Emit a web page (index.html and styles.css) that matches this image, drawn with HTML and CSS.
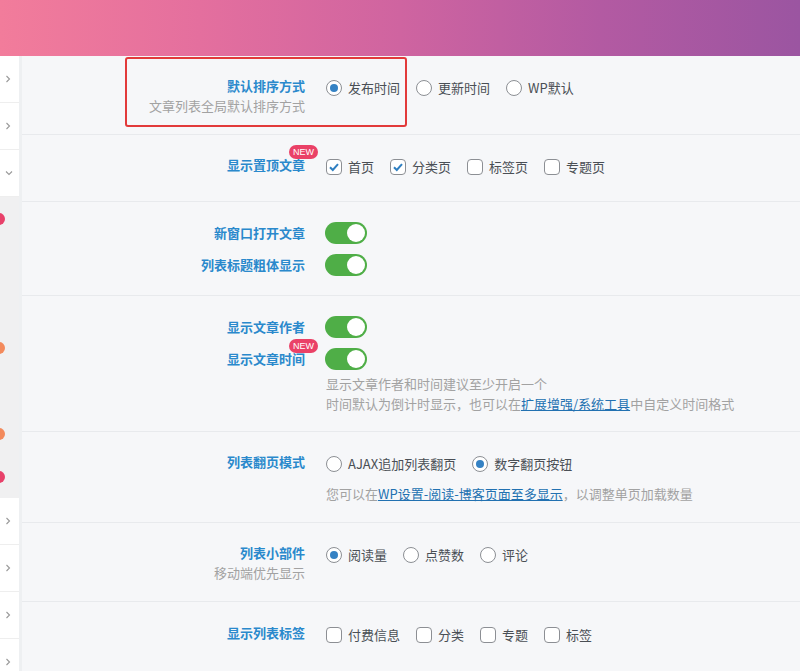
FILE: index.html
```html
<!DOCTYPE html>
<html lang="zh-CN">
<head>
    <meta charset="UTF-8">
    <meta name="viewport" content="width=device-width, initial-scale=1.0">
    <title>主题设置 - 文章列表</title>
    <link rel="stylesheet" href="styles.css">
</head>
<body>
    <div class="banner"></div>
    <div class="page">
        <aside class="side">
            <div class="side-item"><svg width="6" height="8" viewBox="0 0 6 8"><path d="M1.5 1l3 3-3 3" fill="none" stroke="#999" stroke-width="1.1"/></svg></div>
            <div class="side-item"><svg width="6" height="8" viewBox="0 0 6 8"><path d="M1.5 1l3 3-3 3" fill="none" stroke="#999" stroke-width="1.1"/></svg></div>
            <div class="side-item"><svg width="8" height="6" viewBox="0 0 8 6"><path d="M1 1.5l3 3 3-3" fill="none" stroke="#999" stroke-width="1.1"/></svg></div>
            <div class="side-sub">
                <div class="sub-item"><span class="dot pink"></span></div>
                <div class="sub-item"></div>
                <div class="sub-item"></div>
                <div class="sub-item"><span class="dot orange"></span></div>
                <div class="sub-item"></div>
                <div class="sub-item"><span class="dot orange"></span></div>
                <div class="sub-item"><span class="dot pink"></span></div>
            </div>
            <div class="side-item"><svg width="6" height="8" viewBox="0 0 6 8"><path d="M1.5 1l3 3-3 3" fill="none" stroke="#999" stroke-width="1.1"/></svg></div>
            <div class="side-item"><svg width="6" height="8" viewBox="0 0 6 8"><path d="M1.5 1l3 3-3 3" fill="none" stroke="#999" stroke-width="1.1"/></svg></div>
            <div class="side-item"><svg width="6" height="8" viewBox="0 0 6 8"><path d="M1.5 1l3 3-3 3" fill="none" stroke="#999" stroke-width="1.1"/></svg></div>
            <div class="side-item"><svg width="6" height="8" viewBox="0 0 6 8"><path d="M1.5 1l3 3-3 3" fill="none" stroke="#999" stroke-width="1.1"/></svg></div>
        </aside>

        <main class="panel">
            <!-- 默认排序 -->
            <div class="row row-sort">
                <div class="label">
                    <div class="title">默认排序方式</div>
                    <div class="desc">文章列表全局默认排序方式</div>
                </div>
                <div class="opts">
                    <label class="opt"><span class="radio on"></span>发布时间</label>
                    <label class="opt"><span class="radio"></span>更新时间</label>
                    <label class="opt"><span class="radio"></span>WP默认</label>
                </div>
                <div class="mark"></div>
            </div>

            <!-- 置顶 -->
            <div class="row row-top">
                <div class="label">
                    <div class="title"><span class="new-wrap">显示置顶文章<span class="new">NEW</span></span></div>
                </div>
                <div class="opts">
                    <label class="opt"><span class="check on"><svg width="14" height="14" viewBox="0 0 14 14"><path d="M3 7.2l2.8 2.8L11 4.2" fill="none" stroke="#2f7fc1" stroke-width="2"/></svg></span>首页</label>
                    <label class="opt"><span class="check on"><svg width="14" height="14" viewBox="0 0 14 14"><path d="M3 7.2l2.8 2.8L11 4.2" fill="none" stroke="#2f7fc1" stroke-width="2"/></svg></span>分类页</label>
                    <label class="opt"><span class="check"></span>标签页</label>
                    <label class="opt"><span class="check"></span>专题页</label>
                </div>
            </div>

            <!-- 开关 -->
            <div class="row row-switch">
                <div class="title line">新窗口打开文章</div>
                <div class="line"><span class="switch"></span></div>
                <div class="title line">列表标题粗体显示</div>
                <div class="line"><span class="switch"></span></div>
            </div>

            <div class="row row-switch row-meta">
                <div class="title line">显示文章作者</div>
                <div class="line"><span class="switch"></span></div>
                <div class="title line"><span class="new-wrap">显示文章时间<span class="new">NEW</span></span></div>
                <div class="line"><span class="switch"></span></div>
                <div></div>
                <div class="desc note">
                    显示文章作者和时间建议至少开启一个<br>
                    时间默认为倒计时显示，也可以在<a href="#">扩展增强/系统工具</a>中自定义时间格式
                </div>
            </div>

            <!-- 翻页 -->
            <div class="row row-page">
                <div class="label">
                    <div class="title">列表翻页模式</div>
                </div>
                <div>
                    <div class="opts">
                        <label class="opt"><span class="radio"></span>AJAX追加列表翻页</label>
                        <label class="opt"><span class="radio on"></span>数字翻页按钮</label>
                    </div>
                    <div class="desc note">您可以在<a href="#">WP设置-阅读-博客页面至多显示</a>，以调整单页加载数量</div>
                </div>
            </div>

            <!-- 小部件 -->
            <div class="row">
                <div class="label">
                    <div class="title">列表小部件</div>
                    <div class="desc">移动端优先显示</div>
                </div>
                <div class="opts">
                    <label class="opt"><span class="radio on"></span>阅读量</label>
                    <label class="opt"><span class="radio"></span>点赞数</label>
                    <label class="opt"><span class="radio"></span>评论</label>
                </div>
            </div>

            <!-- 标签 -->
            <div class="row row-last">
                <div class="label">
                    <div class="title">显示列表标签</div>
                </div>
                <div class="opts">
                    <label class="opt"><span class="check"></span>付费信息</label>
                    <label class="opt"><span class="check"></span>分类</label>
                    <label class="opt"><span class="check"></span>专题</label>
                    <label class="opt"><span class="check"></span>标签</label>
                </div>
            </div>
        </main>
    </div>
</body>
</html>
```

FILE: styles.css
```css
body {
    margin: 0;
    font-family: "Noto Sans CJK SC", "Noto Sans", sans-serif;
    font-size: 13px;
    color: #4a4f55;
    background-color: #f6f7f9;
}
.banner {
    height: 56px;
    background: linear-gradient(90deg, #f27c9b 0%, #e46f9e 25%, #cf64a0 50%, #b35aa2 75%, #9b55a1 100%);
}
.page {
    display: flex;
    height: 615px;
    overflow: hidden;
    background-color: #eef0f2;
}
.side {
    width: 19px;
    flex: none;
    background-color: #fff;
    overflow: hidden;
}
.side-item {
    height: 46px;
    border-bottom: 1px solid #eeeeee;
    display: flex;
    align-items: center;
    padding-left: 5px;
}
.side-sub {
    background-color: #f0f0f1;
}
.sub-item {
    height: 43px;
    display: flex;
    align-items: center;
}
.dot {
    width: 12px;
    height: 12px;
    border-radius: 50%;
    margin-left: -7px;
}
.dot.pink {
    background-color: #e8416a;
}
.dot.orange {
    background-color: #f38a5c;
}
.panel {
    flex: 1;
    margin-left: 3px;
    background-color: #f6f7f9;
}
.row {
    position: relative;
    display: grid;
    grid-template-columns: 283px 1fr;
    column-gap: 21px;
    padding: 20px 0 18px;
    border-bottom: 1px solid #e8eaed;
    line-height: 20px;
}
.label {
    text-align: right;
}
.title {
    color: #2a89cc;
    font-weight: bold;
    text-align: right;
}
.desc {
    color: #a2a2a2;
}
.desc a {
    color: #2271b1;
}
.opts {
    display: flex;
    align-items: center;
    height: 20px;
    margin-top: 2px;
}
.opt {
    display: flex;
    align-items: center;
    gap: 6px;
    margin-right: 16px;
    color: #4a4f55;
}
.radio, .check {
    width: 14px;
    height: 14px;
    border: 1px solid #8c8f94;
    background-color: #fff;
    box-sizing: content-box;
    display: flex;
    align-items: center;
    justify-content: center;
}
.radio {
    border-radius: 50%;
}
.radio.on::after {
    content: "";
    width: 8px;
    height: 8px;
    border-radius: 50%;
    background-color: #3582c4;
}
.check {
    border-radius: 4px;
}
.switch {
    display: block;
    position: relative;
    width: 42px;
    height: 22px;
    border-radius: 11px;
    background-color: #4fae47;
    margin-left: -1px;
}
.switch::after {
    content: "";
    position: absolute;
    top: 2px;
    right: 2px;
    width: 18px;
    height: 18px;
    border-radius: 50%;
    background-color: #fff;
}
.new-wrap {
    position: relative;
}
.new {
    position: absolute;
    top: -10px;
    right: -13px;
    padding: 0 4px;
    font-size: 9px;
    line-height: 14px;
    font-weight: normal;
    font-family: "Liberation Sans", sans-serif;
    color: #fff;
    background-color: #ea4167;
    border-radius: 7px;
}
.mark {
    position: absolute;
    left: 103px;
    top: 1px;
    width: 278px;
    height: 66px;
    border: 2px solid #e23a3a;
    border-radius: 3px;
}
.row-top {
    padding-bottom: 24px;
}
.row-switch {
    padding: 19px 0 18px;
    row-gap: 8px;
}
.row-switch .line {
    display: flex;
    align-items: center;
    justify-content: flex-end;
    height: 24px;
}
.row-switch .line:nth-child(even) {
    justify-content: flex-start;
}
.row-meta {
    padding-bottom: 17px;
}
.row-meta .note {
    margin-top: -5px;
}
.row-page {
    padding-top: 20px;
}
.row-page .note {
    margin-top: 10px;
}
.row-last {
    padding-top: 21px;
    border-bottom: none;
}
```
